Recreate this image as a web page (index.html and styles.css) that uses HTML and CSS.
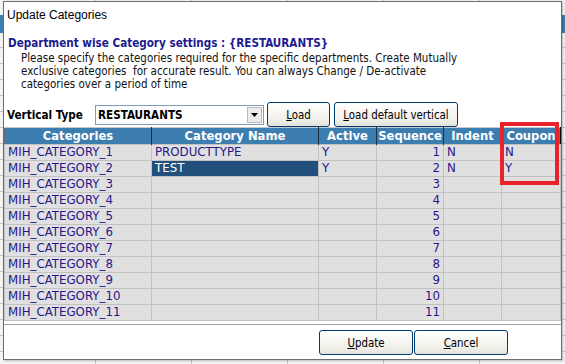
FILE: index.html
```html
<!DOCTYPE html>
<html lang="en">
<head>
  <meta charset="UTF-8" />
  <title>Update Categories</title>
  <link rel="stylesheet" href="styles.css">
</head>
<body>
  <div class="dialog">
    <div class="title">Update Categories</div>

    <h1>Department wise Category settings : {RESTAURANTS}</h1>
    <p class="intro">
      Please specify the categories required for the specific departments. Create Mutually<br>
      exclusive categories &nbsp;for accurate result. You can always Change / De-activate<br>
      categories over a period of time
    </p>

    <div class="toolbar">
      <label for="vertical">Vertical Type</label>
      <div class="combo" id="vertical">
        <span class="combo-value">RESTAURANTS</span>
        <span class="combo-arrow">
          <svg width="7" height="4" viewBox="0 0 7 4"><path d="M0 0h7L3.5 4z" fill="#000"/></svg>
        </span>
      </div>
      <button class="btn btn-load"><u>L</u>oad</button>
      <button class="btn btn-default"><u>L</u>oad default vertical</button>
    </div>

    <div class="grid-panel">
      <table class="grid">
        <colgroup>
          <col style="width:147px">
          <col style="width:167px">
          <col style="width:58px">
          <col style="width:67px">
          <col style="width:58px">
          <col style="width:59px">
        </colgroup>
        <thead>
          <tr>
            <th>Categories</th>
            <th>Category Name</th>
            <th>Active</th>
            <th>Sequence</th>
            <th>Indent</th>
            <th>Coupon</th>
          </tr>
        </thead>
        <tbody>
          <tr><td>MIH_CATEGORY_1</td><td>PRODUCTTYPE</td><td>Y</td><td class="num">1</td><td>N</td><td>N</td></tr>
          <tr><td>MIH_CATEGORY_2</td><td class="selected">TEST</td><td>Y</td><td class="num">2</td><td>N</td><td>Y</td></tr>
          <tr><td>MIH_CATEGORY_3</td><td></td><td></td><td class="num">3</td><td></td><td></td></tr>
          <tr><td>MIH_CATEGORY_4</td><td></td><td></td><td class="num">4</td><td></td><td></td></tr>
          <tr><td>MIH_CATEGORY_5</td><td></td><td></td><td class="num">5</td><td></td><td></td></tr>
          <tr><td>MIH_CATEGORY_6</td><td></td><td></td><td class="num">6</td><td></td><td></td></tr>
          <tr><td>MIH_CATEGORY_7</td><td></td><td></td><td class="num">7</td><td></td><td></td></tr>
          <tr><td>MIH_CATEGORY_8</td><td></td><td></td><td class="num">8</td><td></td><td></td></tr>
          <tr><td>MIH_CATEGORY_9</td><td></td><td></td><td class="num">9</td><td></td><td></td></tr>
          <tr><td>MIH_CATEGORY_10</td><td></td><td></td><td class="num">10</td><td></td><td></td></tr>
          <tr><td>MIH_CATEGORY_11</td><td></td><td></td><td class="num">11</td><td></td><td></td></tr>
        </tbody>
      </table>
      <div class="highlight"></div>
    </div>

    <div class="actions">
      <button class="btn btn-action"><u>U</u>pdate</button>
      <button class="btn btn-action"><u>C</u>ancel</button>
    </div>
  </div>
</body>
</html>
```

FILE: styles.css
```css
html, body {
  margin: 0;
  padding: 0;
}

body {
  width: 565px;
  height: 364px;
  overflow: hidden;
  background-color: #f4f4f4;
  background-image:
    linear-gradient(to bottom, transparent 15px, #3e7fb1 15px, #3e7fb1 33px, transparent 33px),
    repeating-linear-gradient(to bottom, transparent 0, transparent 15px, #c6c6c6 15px, #c6c6c6 16px),
    repeating-linear-gradient(to right, transparent 0, transparent 95px, #c6c6c6 95px, #c6c6c6 96px);
  font-family: 'DejaVu Sans Condensed', 'DejaVu Sans', sans-serif;
  font-size: 11px;
  color: #000;
}

.dialog {
  position: relative;
  margin: 1px 0 0 3px;
  width: 557px;
  height: 357px;
  background: #fff;
  border: 1px solid #6e6e6e;
  box-shadow: 1px 1px 2px rgba(0, 0, 0, 0.25);
}

.title {
  font-family: 'Liberation Sans', sans-serif;
  font-size: 12px;
  padding: 6px 0 0 3px;
  height: 21px;
  box-sizing: border-box;
}

h1 {
  margin: 13px 0 0 4px;
  font-size: 11.6px;
  font-weight: bold;
  color: #1c1c8e;
  line-height: 14px;
}

.intro {
  margin: 2px 0 0 17px;
  line-height: 13px;
  font-size: 11.5px;
  color: #111;
}

.toolbar {
  display: flex;
  align-items: center;
  margin-top: 11px;
  padding-left: 3px;
  height: 25px;
}

.toolbar label {
  font-weight: bold;
  font-size: 11.6px;
  width: 88px;
}

.combo {
  display: flex;
  align-items: center;
  width: 169px;
  height: 20px;
  border: 1px solid #7f9db9;
  box-sizing: border-box;
}

.combo-value {
  flex: 1;
  padding-left: 2px;
  font-weight: bold;
  font-size: 11.6px;
}

.combo-arrow {
  display: flex;
  align-items: center;
  justify-content: center;
  width: 15px;
  height: 16px;
  margin-right: 1px;
  background: #ececec;
  border: 1px solid #b9b9b9;
  box-sizing: border-box;
}

.btn {
  font-family: 'DejaVu Sans Condensed', 'DejaVu Sans', sans-serif;
  font-size: 11.4px;
  color: #000;
  background: linear-gradient(to bottom, #ffffff, #f1f0ea 70%, #e3e2da);
  border: 1px solid #003c74;
  border-radius: 3px;
  padding: 0;
  height: 25px;
}

.btn-load {
  width: 63px;
  margin-left: 3px;
}

.btn-default {
  width: 124px;
  margin-left: 4px;
}

.grid-panel {
  position: relative;
  margin-top: 0;
  padding-bottom: 3px;
  border-bottom: 1px solid #a0a0a0;
}

.grid {
  border-collapse: collapse;
  table-layout: fixed;
  width: 556px;
  border-top: 1px solid #c8c8c8;
  border-right: 1px solid #000;
  border-bottom: 1px solid #000;
  border-left: 1px solid #6a6a6a;
  font-family: 'DejaVu Sans', sans-serif;
  font-size: 11.8px;
}

.grid th {
  height: 16px;
  padding: 0;
  background: #3d7eb0;
  color: #fff;
  font-weight: bold;
  font-size: 11.6px;
  text-align: center;
  border-left: 1px solid #1f2e40;
  line-height: 15px;
}

.grid th:first-child {
  border-left: none;
}

.grid td {
  height: 15px;
  padding: 0 3px;
  background: #e0e0e0;
  color: #27168c;
  border: 1px solid #c2c2c2;
  line-height: 15px;
  white-space: nowrap;
  overflow: hidden;
}

.grid td.num {
  text-align: right;
}

.grid td.selected {
  background: #234f7d;
  color: #fff;
}

.highlight {
  position: absolute;
  left: 496px;
  top: -5px;
  width: 51px;
  height: 55px;
  border: 4px solid #e8212b;
}

.actions {
  display: flex;
  gap: 1px;
  margin-top: 5px;
  padding-left: 315px;
}

.btn-action {
  width: 94px;
  height: 25px;
}
```
